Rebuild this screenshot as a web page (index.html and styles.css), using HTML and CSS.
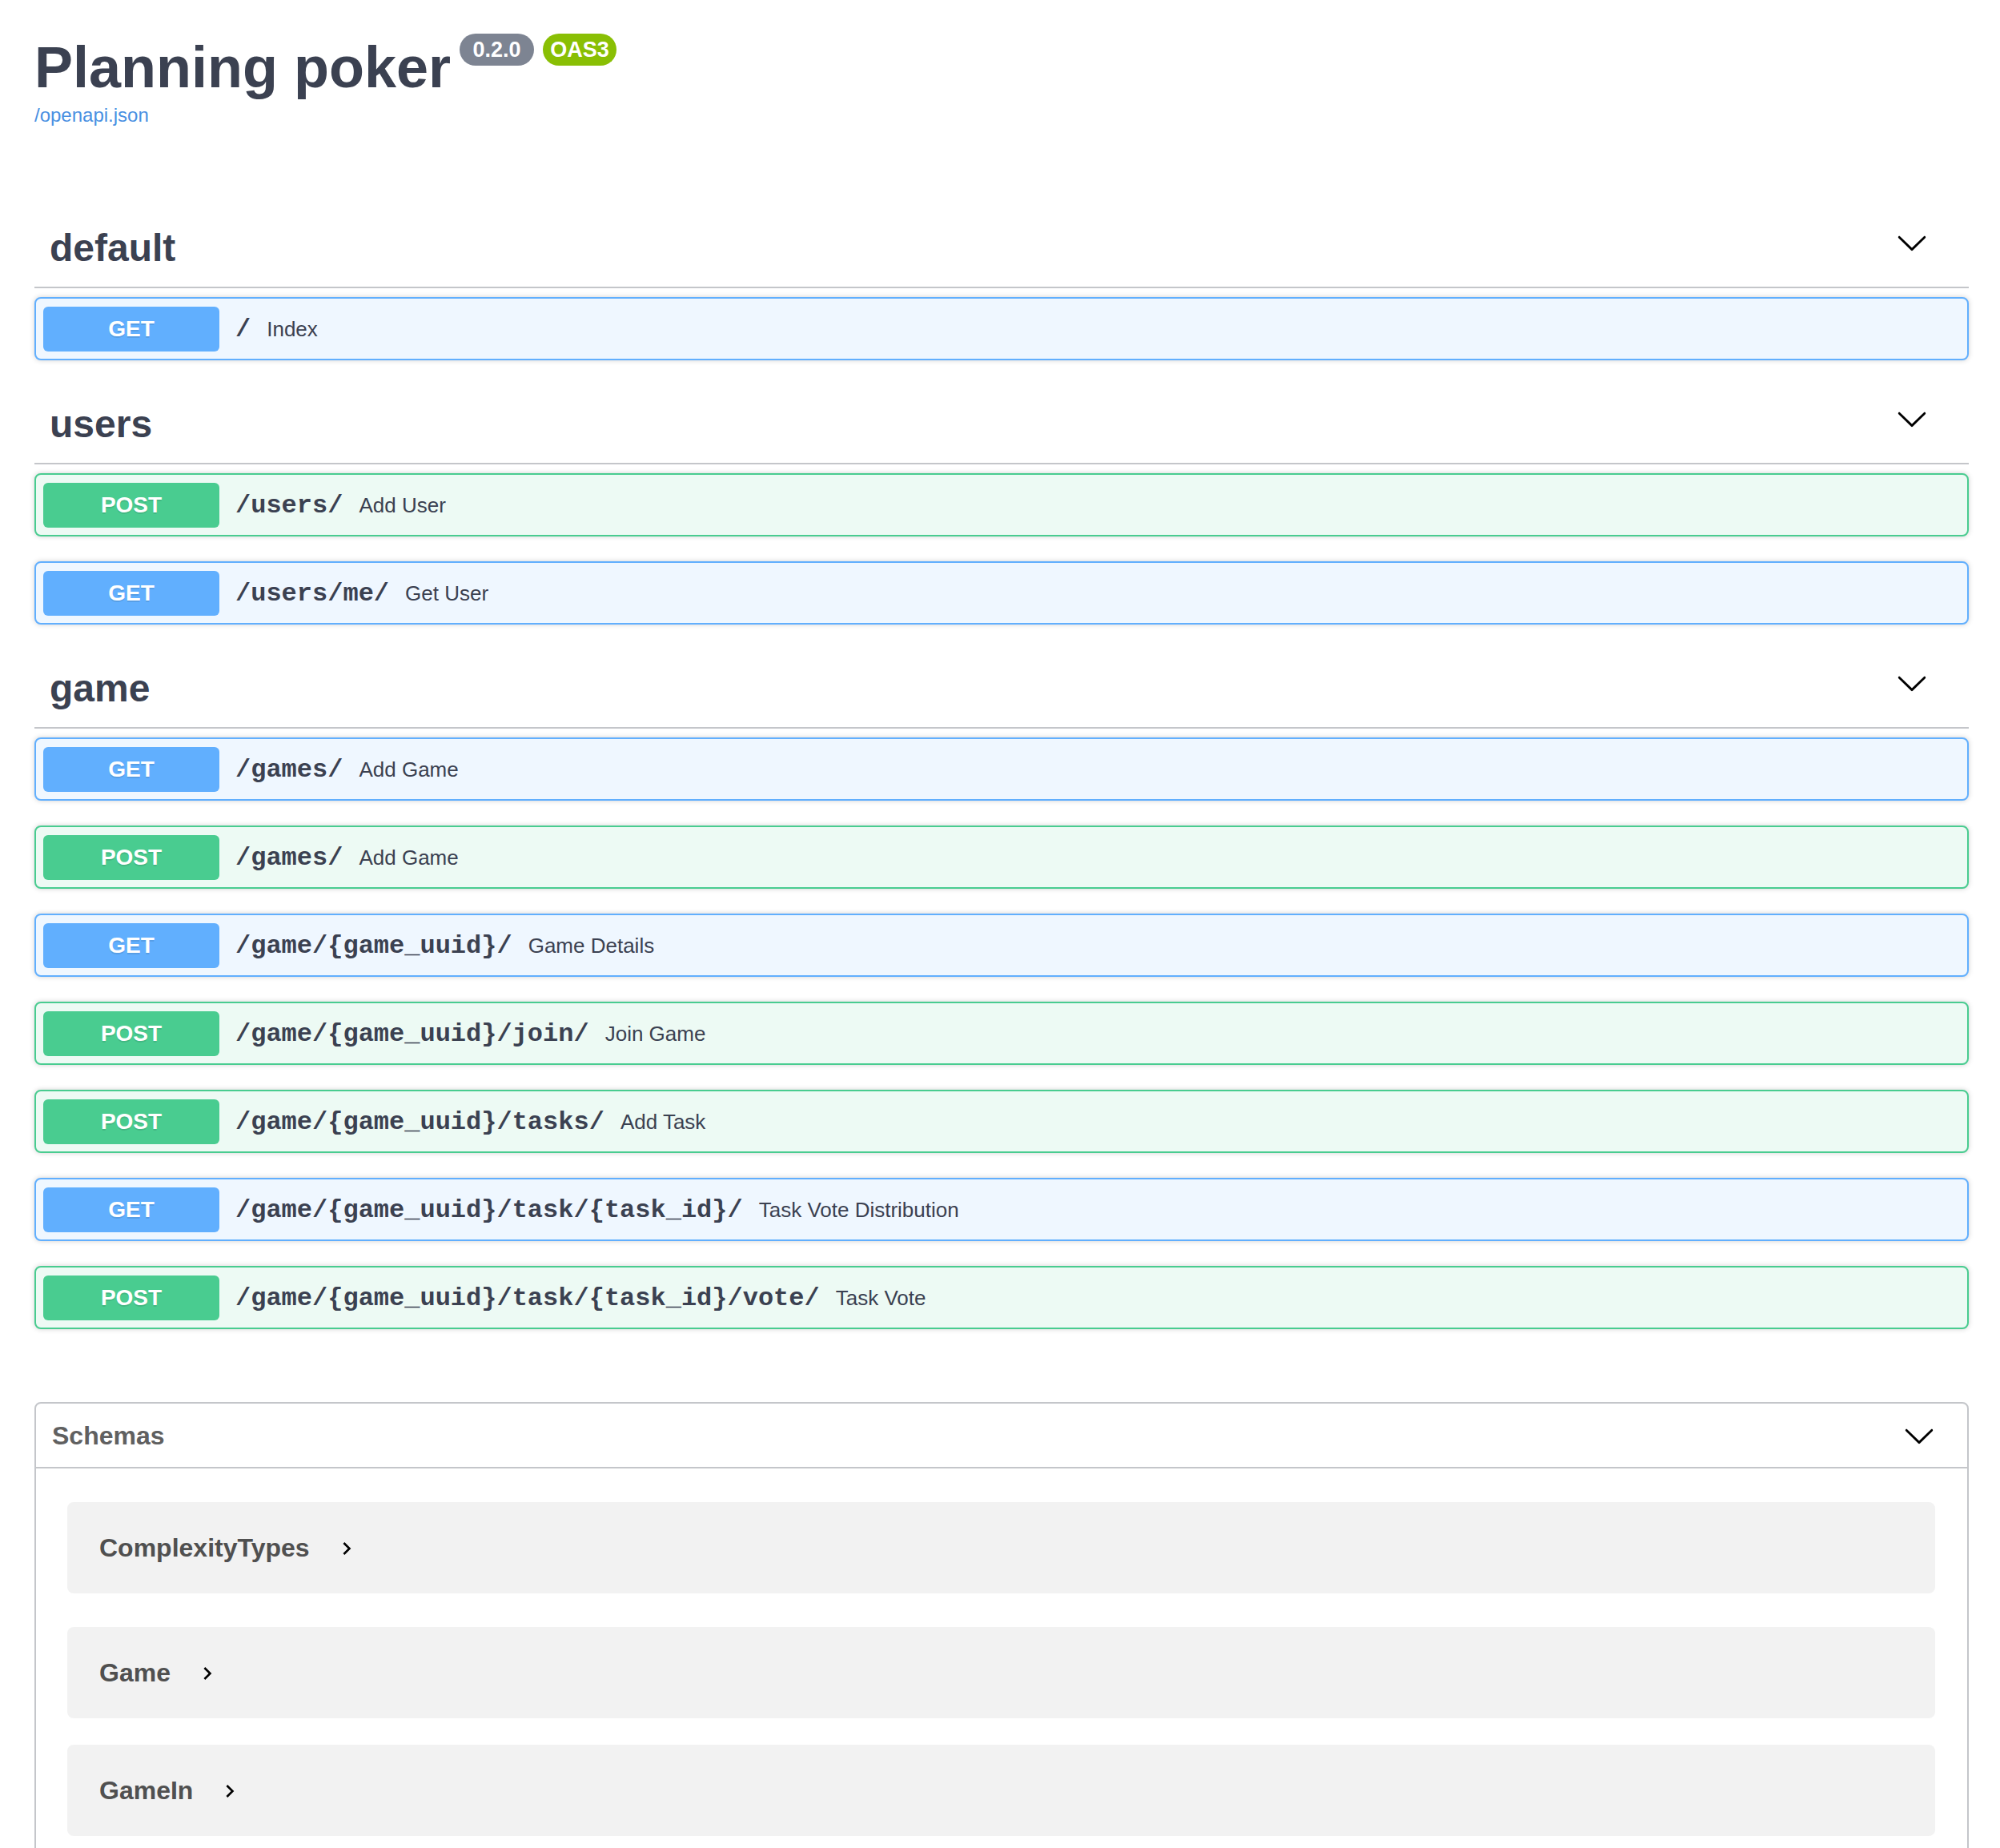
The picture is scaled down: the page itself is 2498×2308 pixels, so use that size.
FILE: index.html
```html
<!DOCTYPE html>
<html lang="en">
<head>
<meta charset="utf-8">
<title>Planning poker - Swagger UI</title>
<link rel="stylesheet" href="styles.css">
</head>
<body>
<div class="wrapper">
  <div class="info">
    <h2 class="title"><span class="title-text">Planning poker</span><span class="badge badge-version"> 0.2.0 </span><span class="badge badge-oas">OAS3</span></h2>
    <a class="spec-link" href="#">/openapi.json</a>
  </div>

  <div class="tag-section">
    <h3 class="tag"><span class="tag-name">default</span><svg class="tag-arrow" viewBox="0 0 20 20"><path d="M17.418 6.109c.272-.268.709-.268.979 0s.271.701 0 .969l-7.908 7.83c-.27.268-.707.268-.979 0l-7.908-7.83c-.27-.268-.27-.701 0-.969.271-.268.709-.268.979 0L10 13.25l7.418-7.141z"/></svg></h3>
    <div class="opblock get"><div class="summary"><span class="method">GET</span><span class="path">/</span><span class="desc">Index</span></div></div>
  </div>

  <div class="tag-section">
    <h3 class="tag"><span class="tag-name">users</span><svg class="tag-arrow" viewBox="0 0 20 20"><path d="M17.418 6.109c.272-.268.709-.268.979 0s.271.701 0 .969l-7.908 7.83c-.27.268-.707.268-.979 0l-7.908-7.83c-.27-.268-.27-.701 0-.969.271-.268.709-.268.979 0L10 13.25l7.418-7.141z"/></svg></h3>
    <div class="opblock post"><div class="summary"><span class="method">POST</span><span class="path">/users/</span><span class="desc">Add User</span></div></div>
    <div class="opblock get"><div class="summary"><span class="method">GET</span><span class="path">/users/me/</span><span class="desc">Get User</span></div></div>
  </div>

  <div class="tag-section">
    <h3 class="tag"><span class="tag-name">game</span><svg class="tag-arrow" viewBox="0 0 20 20"><path d="M17.418 6.109c.272-.268.709-.268.979 0s.271.701 0 .969l-7.908 7.83c-.27.268-.707.268-.979 0l-7.908-7.83c-.27-.268-.27-.701 0-.969.271-.268.709-.268.979 0L10 13.25l7.418-7.141z"/></svg></h3>
    <div class="opblock get"><div class="summary"><span class="method">GET</span><span class="path">/games/</span><span class="desc">Add Game</span></div></div>
    <div class="opblock post"><div class="summary"><span class="method">POST</span><span class="path">/games/</span><span class="desc">Add Game</span></div></div>
    <div class="opblock get"><div class="summary"><span class="method">GET</span><span class="path">/game/{game_uuid}/</span><span class="desc">Game Details</span></div></div>
    <div class="opblock post"><div class="summary"><span class="method">POST</span><span class="path">/game/{game_uuid}/join/</span><span class="desc">Join Game</span></div></div>
    <div class="opblock post"><div class="summary"><span class="method">POST</span><span class="path">/game/{game_uuid}/tasks/</span><span class="desc">Add Task</span></div></div>
    <div class="opblock get"><div class="summary"><span class="method">GET</span><span class="path">/game/{game_uuid}/task/{task_id}/</span><span class="desc">Task Vote Distribution</span></div></div>
    <div class="opblock post"><div class="summary"><span class="method">POST</span><span class="path">/game/{game_uuid}/task/{task_id}/vote/</span><span class="desc">Task Vote</span></div></div>
  </div>

  <section class="models">
    <h4 class="models-head"><span>Schemas</span><svg class="models-arrow" viewBox="0 0 20 20"><path d="M17.418 6.109c.272-.268.709-.268.979 0s.271.701 0 .969l-7.908 7.83c-.27.268-.707.268-.979 0l-7.908-7.83c-.27-.268-.27-.701 0-.969.271-.268.709-.268.979 0L10 13.25l7.418-7.141z"/></svg></h4>
    <div class="models-body">
      <div class="model"><span class="model-title">ComplexityTypes</span><svg class="model-toggle" viewBox="0 0 24 24"><path d="M10 6L8.59 7.41 13.17 12l-4.58 4.59L10 18l6-6z"/></svg></div>
      <div class="model"><span class="model-title">Game</span><svg class="model-toggle" viewBox="0 0 24 24"><path d="M10 6L8.59 7.41 13.17 12l-4.58 4.59L10 18l6-6z"/></svg></div>
      <div class="model"><span class="model-title">GameIn</span><svg class="model-toggle" viewBox="0 0 24 24"><path d="M10 6L8.59 7.41 13.17 12l-4.58 4.59L10 18l6-6z"/></svg></div>
    </div>
  </section>
</div>
</body>
</html>
```

FILE: styles.css
```css
html, body {
  margin: 0;
  padding: 0;
  background: #ffffff;
}

body {
  font-family: "Liberation Sans", Arial, Helvetica, sans-serif;
  color: #3b4151;
}

.wrapper {
  padding: 0 39px 0 43px;
}

/* ---------- info ---------- */
.info {
  padding-top: 44px;
  margin-bottom: 103px;
}

.title {
  display: flex;
  align-items: flex-start;
  margin: 0;
  font-size: 72px;
  line-height: 80px;
  font-weight: 700;
  color: #3b4151;
}

.badge {
  display: inline-block;
  margin-top: -2px;
  margin-left: 11px;
  padding: 0 9px;
  height: 40px;
  line-height: 40px;
  border-radius: 114px;
  font-size: 27px;
  font-weight: 700;
  color: #ffffff;
  white-space: pre;
}

.badge-version {
  background: #7d8492;
}

.badge-oas {
  background: #89bf04;
}

.spec-link {
  display: block;
  margin-top: 6px;
  font-size: 24px;
  line-height: 28px;
  color: #4990e2;
  text-decoration: none;
}

/* ---------- tags ---------- */
.tag {
  display: flex;
  align-items: center;
  justify-content: space-between;
  margin: 0 0 11px;
  padding: 21px 51px 20px 19px;
  border-bottom: 2px solid rgba(59, 65, 81, 0.3);
  font-size: 48px;
  line-height: 56px;
  font-weight: 700;
  color: #3b4151;
}

.tag-arrow {
  width: 40px;
  height: 40px;
  margin-bottom: 14px;
  fill: #000000;
}

/* ---------- operations ---------- */
.opblock {
  margin: 0 0 31px;
  border: 2px solid;
  border-radius: 8px;
  box-shadow: 0 0 6px rgba(0, 0, 0, 0.19);
}

.opblock.get {
  background: #eff7ff;
  border-color: #61affe;
}

.opblock.post {
  background: #edfaf4;
  border-color: #49cc90;
}

.summary {
  display: flex;
  align-items: center;
  padding: 10px 10px 9px 9px;
}

.method {
  width: 220px;
  height: 56px;
  line-height: 56px;
  flex-shrink: 0;
  text-align: center;
  border-radius: 6px;
  font-size: 28px;
  font-weight: 700;
  color: #ffffff;
  text-shadow: 0 2px 0 rgba(0, 0, 0, 0.1);
}

.get .method {
  background: #61affe;
}

.post .method {
  background: #49cc90;
}

.path {
  padding: 0 20px;
  font-family: "Liberation Mono", "Courier New", monospace;
  font-size: 32px;
  font-weight: 700;
  color: #3b4151;
}

.desc {
  font-size: 26px;
  color: #3b4151;
}

/* ---------- models ---------- */
.models {
  margin-top: 91px;
  border: 2px solid rgba(59, 65, 81, 0.3);
  border-radius: 8px;
}

.models-head {
  display: flex;
  align-items: center;
  justify-content: space-between;
  margin: 0;
  padding: 20px 40px 19px 20px;
  border-bottom: 2px solid rgba(59, 65, 81, 0.3);
  font-size: 32px;
  line-height: 40px;
  font-weight: 700;
  color: #606060;
}

.models-arrow {
  width: 40px;
  height: 40px;
  fill: #000000;
}

.models-body {
  padding: 42px 40px 40px 39px;
  display: flex;
  flex-direction: column;
}

.model {
  display: flex;
  align-items: center;
  margin-bottom: 33px;
  padding: 40px 40px 39px 40px;
  background: #f2f2f2;
  border-radius: 8px;
}

.model:first-child {
  margin-bottom: 42px;
}

.model-title {
  font-size: 32px;
  line-height: 35px;
  font-weight: 700;
  color: #505050;
}

.model-toggle {
  width: 32px;
  height: 32px;
  margin-left: 30px;
  fill: #000000;
}
```
